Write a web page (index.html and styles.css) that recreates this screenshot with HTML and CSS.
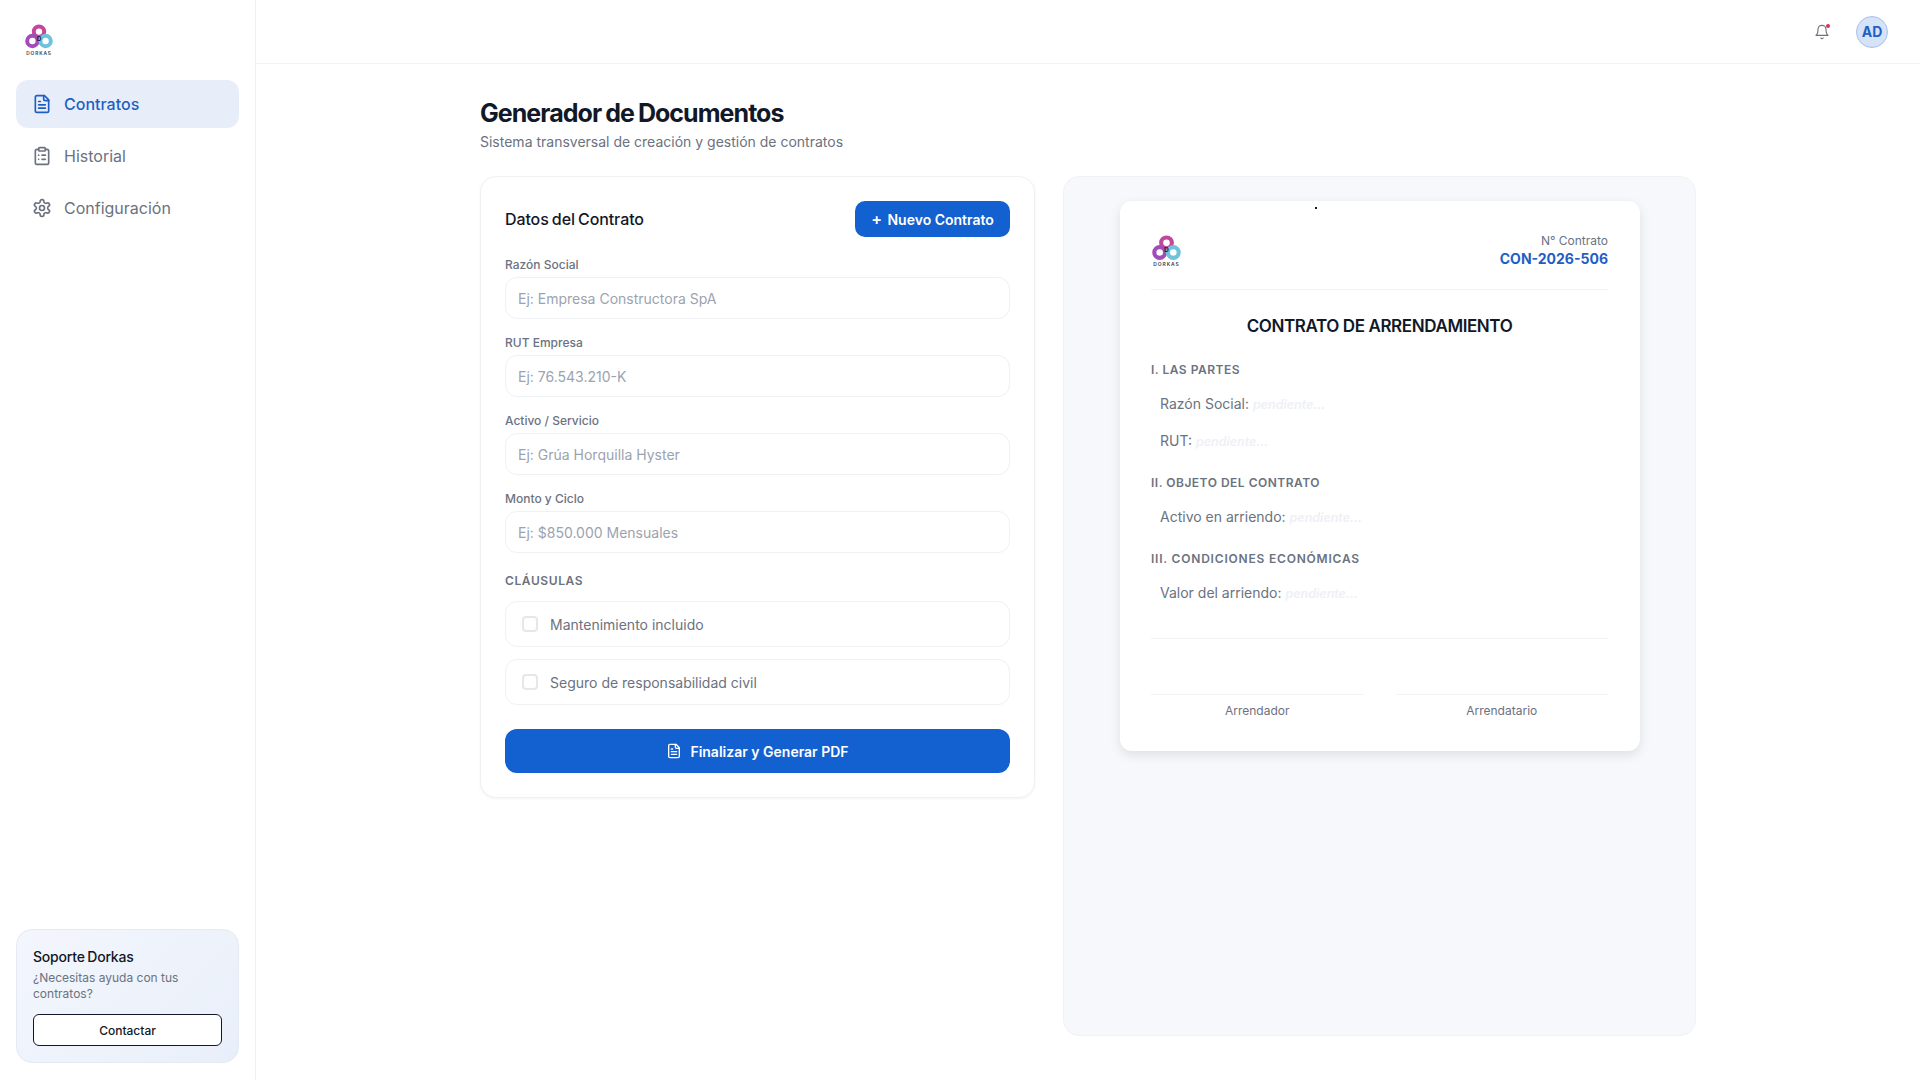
FILE: index.html
```html
<!DOCTYPE html>
<html lang="es">
<head>
    <meta charset="UTF-8">
    <meta name="viewport" content="width=device-width, initial-scale=1.0">
    <title>Generador de Documentos</title>
    <link rel="stylesheet" href="styles.css">
</head>
<body>
    <aside class="sidebar">
        <div class="brand">
            <svg class="logo" viewBox="0 0 30 32" width="30" height="32">
                <circle cx="15" cy="7.6" r="5.2" fill="none" stroke="#c4479a" stroke-width="4"/>
                <circle cx="8.4" cy="17" r="5.2" fill="none" stroke="#a24cba" stroke-width="4"/>
                <circle cx="21.6" cy="17" r="5.2" fill="none" stroke="#6fc2da" stroke-width="4"/>
                <text x="15" y="16.5" class="logo-d">D</text>
                <text x="15" y="30.5" class="logo-name">DORKAS</text>
            </svg>
        </div>
        <nav class="nav">
            <a class="nav-item active" href="#">
                <svg class="icon" viewBox="0 0 24 24"><path d="M15 2H6a2 2 0 0 0-2 2v16a2 2 0 0 0 2 2h12a2 2 0 0 0 2-2V7Z"/><path d="M14 2v4a2 2 0 0 0 2 2h4"/><path d="M10 9H8"/><path d="M16 13H8"/><path d="M16 17H8"/></svg>
                Contratos
            </a>
            <a class="nav-item" href="#">
                <svg class="icon" viewBox="0 0 24 24"><rect x="8" y="2" width="8" height="4" rx="1"/><path d="M16 4h2a2 2 0 0 1 2 2v14a2 2 0 0 1-2 2H6a2 2 0 0 1-2-2V6a2 2 0 0 1 2-2h2"/><path d="M12 11h4"/><path d="M12 16h4"/><path d="M8 11h.01"/><path d="M8 16h.01"/></svg>
                Historial
            </a>
            <a class="nav-item" href="#">
                <svg class="icon" viewBox="0 0 24 24"><path d="M12.22 2h-.44a2 2 0 0 0-2 2v.18a2 2 0 0 1-1 1.73l-.43.25a2 2 0 0 1-2 0l-.15-.08a2 2 0 0 0-2.73.73l-.22.38a2 2 0 0 0 .73 2.73l.15.1a2 2 0 0 1 1 1.72v.51a2 2 0 0 1-1 1.74l-.15.09a2 2 0 0 0-.73 2.73l.22.38a2 2 0 0 0 2.73.73l.15-.08a2 2 0 0 1 2 0l.43.25a2 2 0 0 1 1 1.73V20a2 2 0 0 0 2 2h.44a2 2 0 0 0 2-2v-.18a2 2 0 0 1 1-1.73l.43-.25a2 2 0 0 1 2 0l.15.08a2 2 0 0 0 2.73-.73l.22-.39a2 2 0 0 0-.73-2.73l-.15-.08a2 2 0 0 1-1-1.74v-.5a2 2 0 0 1 1-1.74l.15-.09a2 2 0 0 0 .73-2.73l-.22-.38a2 2 0 0 0-2.73-.73l-.15.08a2 2 0 0 1-2 0l-.43-.25a2 2 0 0 1-1-1.73V4a2 2 0 0 0-2-2z"/><circle cx="12" cy="12" r="3"/></svg>
                Configuración
            </a>
        </nav>
        <div class="support">
            <h4>Soporte Dorkas</h4>
            <p>¿Necesitas ayuda con tus contratos?</p>
            <button class="support-btn">Contactar</button>
        </div>
    </aside>

    <div class="main">
        <header class="topbar">
            <div class="bell">
                <svg class="icon-small" viewBox="0 0 24 24"><path d="M6 8a6 6 0 0 1 12 0c0 7 3 9 3 9H3s3-2 3-9"/><path d="M10.3 21a1.94 1.94 0 0 0 3.4 0"/></svg>
                <span class="bell-dot"></span>
            </div>
            <div class="avatar">AD</div>
        </header>

        <main class="content">
            <h1>Generador de Documentos</h1>
            <p class="subtitle">Sistema transversal de creación y gestión de contratos</p>

            <div class="columns">
                <section class="form-card">
                    <div class="form-head">
                        <h2>Datos del Contrato</h2>
                        <button class="new-btn"><span class="plus">+</span> Nuevo Contrato</button>
                    </div>

                    <label class="field">Razón Social
                        <input type="text" placeholder="Ej: Empresa Constructora SpA">
                    </label>
                    <label class="field">RUT Empresa
                        <input type="text" placeholder="Ej: 76.543.210-K">
                    </label>
                    <label class="field">Activo / Servicio
                        <input type="text" placeholder="Ej: Grúa Horquilla Hyster">
                    </label>
                    <label class="field">Monto y Ciclo
                        <input type="text" placeholder="Ej: $850.000 Mensuales">
                    </label>

                    <div class="clauses-title">CLÁUSULAS</div>
                    <label class="clause"><input type="checkbox"> Mantenimiento incluido</label>
                    <label class="clause"><input type="checkbox"> Seguro de responsabilidad civil</label>

                    <button class="generate-btn">
                        <svg class="icon-btn" viewBox="0 0 24 24"><path d="M15 2H6a2 2 0 0 0-2 2v16a2 2 0 0 0 2 2h12a2 2 0 0 0 2-2V7Z"/><path d="M14 2v4a2 2 0 0 0 2 2h4"/><path d="M10 9H8"/><path d="M16 13H8"/><path d="M16 17H8"/></svg>
                        Finalizar y Generar PDF
                    </button>
                </section>

                <section class="preview">
                    <div class="doc">
                        <span class="speck"></span>
                        <div class="doc-head">
                            <svg class="logo doc-logo" viewBox="0 0 30 32" width="31" height="33">
                                <circle cx="15" cy="7.6" r="5.2" fill="none" stroke="#c4479a" stroke-width="4"/>
                                <circle cx="8.4" cy="17" r="5.2" fill="none" stroke="#a24cba" stroke-width="4"/>
                                <circle cx="21.6" cy="17" r="5.2" fill="none" stroke="#6fc2da" stroke-width="4"/>
                                <text x="15" y="16.5" class="logo-d">D</text>
                                <text x="15" y="30.5" class="logo-name">DORKAS</text>
                            </svg>
                            <div class="doc-number">
                                <span>N° Contrato</span>
                                <strong>CON-2026-506</strong>
                            </div>
                        </div>
                        <h3>CONTRATO DE ARRENDAMIENTO</h3>

                        <h5 class="first">I. LAS PARTES</h5>
                        <p class="line">Razón Social: <em>pendiente...</em></p>
                        <p class="line">RUT: <em>pendiente...</em></p>

                        <h5>II. OBJETO DEL CONTRATO</h5>
                        <p class="line">Activo en arriendo: <em>pendiente...</em></p>

                        <h5 class="wide">III. CONDICIONES ECONÓMICAS</h5>
                        <p class="line">Valor del arriendo: <em>pendiente...</em></p>

                        <div class="signs">
                            <div class="sign">Arrendador</div>
                            <div class="sign">Arrendatario</div>
                        </div>
                    </div>
                </section>
            </div>
        </main>
    </div>
</body>
</html>
```

FILE: styles.css
```css
* {
    box-sizing: border-box;
}

body {
    font-family: Inter, "Liberation Sans", sans-serif;
    margin: 0;
    height: 1080px;
    display: flex;
    background-color: #fff;
    color: #111827;
    overflow: hidden;
}

h1, h2, h3, h4, h5, p {
    margin: 0;
}

/* sidebar */
.sidebar {
    width: 256px;
    flex-shrink: 0;
    border-right: 1px solid #eef0f4;
    display: flex;
    flex-direction: column;
    padding: 24px 16px 17px;
}

.brand {
    height: 32px;
    margin-left: 8px;
    margin-bottom: 24px;
}

.logo {
    display: block;
}

.doc-logo {
    margin-top: 2px;
}

.logo-d {
    font-family: Inter, sans-serif;
    font-size: 6.5px;
    font-weight: 700;
    fill: #1f2937;
    text-anchor: middle;
}

.logo-name {
    font-family: Inter, sans-serif;
    font-size: 4.8px;
    font-weight: 600;
    letter-spacing: 0.9px;
    fill: #374151;
    text-anchor: middle;
}

.nav {
    display: flex;
    flex-direction: column;
    gap: 4px;
}

.nav-item {
    height: 48px;
    display: flex;
    align-items: center;
    gap: 12px;
    padding: 0 16px;
    border-radius: 12px;
    font-size: 16px;
    font-weight: 400;
    color: #6b7280;
    text-decoration: none;
}

.nav-item.active {
    background-color: #e8eef9;
    color: #1f5fc4;
    font-weight: 500;
}

.icon, .icon-small, .icon-btn {
    fill: none;
    stroke: currentColor;
    stroke-width: 2;
    stroke-linecap: round;
    stroke-linejoin: round;
}

.icon {
    width: 20px;
    height: 20px;
}

.support {
    margin-top: auto;
    height: 134px;
    border: 1px solid #e4e9f3;
    border-radius: 16px;
    padding: 17px 16px 0;
    background: linear-gradient(135deg, #f3f6fc, #e9effa);
}

.support h4 {
    font-size: 14px;
    font-weight: 500;
    line-height: 20px;
    letter-spacing: -0.2px;
    word-spacing: -1px;
    color: #111827;
}

.support p {
    font-size: 12px;
    line-height: 16px;
    color: #6b7280;
    margin-top: 3px;
}

.support-btn {
    display: block;
    width: 100%;
    height: 32px;
    margin-top: 12px;
    background-color: #fff;
    border: 1px solid #111827;
    border-radius: 6px;
    font-family: inherit;
    font-size: 12px;
    font-weight: 500;
    color: #111827;
}

/* main area */
.main {
    flex: 1;
    min-width: 0;
}

.topbar {
    height: 64px;
    border-bottom: 1px solid #f1f3f6;
    display: flex;
    justify-content: flex-end;
    align-items: center;
    gap: 26px;
    padding: 0 32px;
}

.bell {
    position: relative;
    width: 16px;
    height: 16px;
    color: #6b7280;
}

.icon-small {
    width: 16px;
    height: 16px;
    display: block;
    stroke-width: 1.7;
}

.bell-dot {
    position: absolute;
    top: 0;
    right: 0;
    width: 4px;
    height: 4px;
    border-radius: 50%;
    background-color: #d9304f;
}

.avatar {
    width: 32px;
    height: 32px;
    border-radius: 50%;
    background-color: #d5e2f7;
    border: 1px solid #a9c1ea;
    color: #1f5fc4;
    font-size: 14px;
    font-weight: 700;
    display: flex;
    align-items: center;
    justify-content: center;
}

.content {
    width: 1216px;
    margin: 0 auto;
    padding-top: 33px;
}

h1 {
    font-size: 25px;
    font-weight: 700;
    line-height: 32px;
    letter-spacing: -0.95px;
    word-spacing: -1px;
    color: #111827;
}

.subtitle {
    font-size: 14px;
    line-height: 20px;
    color: #6b7280;
    margin-top: 3px;
}

.columns {
    display: grid;
    grid-template-columns: 555px 633px;
    gap: 28px;
    margin-top: 24px;
    align-items: start;
}

/* form */
.form-card {
    border: 1px solid #f0f1f4;
    border-radius: 16px;
    padding: 24px;
    box-shadow: 0 1px 3px rgba(0, 0, 0, 0.05);
    background-color: #fff;
}

.form-head {
    display: flex;
    justify-content: space-between;
    align-items: center;
    height: 36px;
    margin-bottom: 20px;
}

.form-head h2 {
    font-size: 16px;
    font-weight: 500;
    letter-spacing: -0.1px;
    word-spacing: -1px;
}

.new-btn {
    height: 36px;
    width: 155px;
    background-color: #1360d0;
    color: #fff;
    border: none;
    border-radius: 10px;
    font-family: inherit;
    font-size: 14px;
    font-weight: 600;
}

.plus {
    font-size: 16px;
    margin-right: 2px;
}

.field {
    display: block;
    font-size: 12px;
    font-weight: 500;
    line-height: 16px;
    color: #6b7280;
    margin-bottom: 16px;
}

.field input {
    display: block;
    width: 100%;
    height: 42px;
    margin-top: 4px;
    padding: 0 12px;
    border: 1px solid #f0f1f4;
    border-radius: 12px;
    font-family: inherit;
    font-size: 14px;
    background-color: #fff;
}

.field input::placeholder {
    color: #9ca3af;
}

.clauses-title {
    font-size: 12px;
    font-weight: 600;
    line-height: 16px;
    letter-spacing: 0.6px;
    color: #6b7280;
    margin-top: 20px;
    margin-bottom: 12px;
}

.clause {
    display: flex;
    align-items: center;
    gap: 12px;
    height: 46px;
    padding: 0 16px;
    border: 1px solid #f0f1f4;
    border-radius: 12px;
    font-size: 14px;
    color: #6b7280;
    margin-bottom: 12px;
}

.clause input {
    appearance: none;
    width: 16px;
    height: 16px;
    margin: 0;
    border: 2px solid #e5e7eb;
    border-radius: 4px;
    background-color: #fff;
}

.generate-btn {
    display: flex;
    align-items: center;
    justify-content: center;
    gap: 8px;
    width: 100%;
    height: 44px;
    margin-top: 24px;
    background-color: #1360d0;
    color: #fff;
    border: none;
    border-radius: 12px;
    font-family: inherit;
    font-size: 14px;
    font-weight: 600;
}

.icon-btn {
    width: 16px;
    height: 16px;
}

/* preview */
.preview {
    height: 860px;
    background-color: #f6f8fc;
    border: 1px solid #f0f2f7;
    border-radius: 16px;
    padding: 24px 55px 24px 56px;
}

.doc {
    position: relative;
    height: 550px;
    background-color: #fff;
    border-radius: 12px;
    padding: 32px 32px 32px 31px;
    box-shadow: 0 4px 12px rgba(0, 0, 0, 0.1);
}

.speck {
    position: absolute;
    top: 6px;
    left: 195px;
    width: 2px;
    height: 2px;
    background-color: #111827;
}

.doc-head {
    display: flex;
    justify-content: space-between;
    align-items: flex-start;
    height: 57px;
    border-bottom: 1px solid #f1f3f6;
}

.doc-number {
    display: flex;
    flex-direction: column;
    align-items: flex-end;
}

.doc-number span {
    font-size: 12px;
    line-height: 16px;
    color: #6b7280;
}

.doc-number strong {
    font-size: 14px;
    font-weight: 700;
    line-height: 20px;
    color: #1f5fc4;
}

.doc h3 {
    font-size: 17px;
    font-weight: 600;
    line-height: 24px;
    letter-spacing: -0.4px;
    text-align: center;
    margin-top: 24px;
}

.doc h5 {
    font-size: 12px;
    font-weight: 600;
    line-height: 16px;
    letter-spacing: 0.5px;
    color: #6b7280;
    margin-top: 23px;
}

.doc h5.first {
    margin-top: 24px;
}

.doc h5.wide {
    letter-spacing: 0.8px;
}

.line {
    font-size: 14px;
    line-height: 20px;
    color: #6b7280;
    padding-left: 9px;
    margin-top: 16px;
}

.line em {
    font-size: 12.5px;
    font-weight: 600;
    color: #eef0f6;
}

.signs {
    display: grid;
    grid-template-columns: 1fr 1fr;
    gap: 32px;
    border-top: 1px solid #f1f3f6;
    margin-top: 34px;
    padding-top: 55px;
}

.sign {
    border-top: 1px solid #f1f3f6;
    padding-top: 8px;
    font-size: 12px;
    line-height: 16px;
    text-align: center;
    color: #6b7280;
}
```
